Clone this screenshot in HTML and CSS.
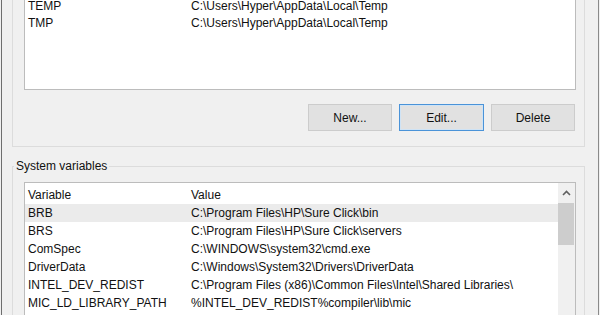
FILE: index.html
```html
<!DOCTYPE html>
<html lang="en">
<head>
    <meta charset="UTF-8">
    <meta name="viewport" content="width=device-width, initial-scale=1.0">
    <title>Environment Variables</title>
    <link rel="stylesheet" href="styles.css">
</head>
<body>
    <div class="window">
        <!-- User variables -->
        <fieldset class="group user-group">
            <legend>User variables for Hyper</legend>
            <div class="list user-list">
                <div class="rows">
                    <div class="row head"><span>Variable</span><span>Value</span></div>
                    <div class="row"><span>OneDrive</span><span>C:\Users\Hyper\OneDrive</span></div>
                    <div class="row"><span>Path</span><span>C:\Users\Hyper\AppData\Local\Microsoft\WindowsApps;</span></div>
                    <div class="row"><span>TEMP</span><span>C:\Users\Hyper\AppData\Local\Temp</span></div>
                    <div class="row"><span>TMP</span><span>C:\Users\Hyper\AppData\Local\Temp</span></div>
                </div>
            </div>
            <div class="buttons">
                <button>New...</button>
                <button class="focused">Edit...</button>
                <button>Delete</button>
            </div>
        </fieldset>

        <!-- System variables -->
        <fieldset class="group system-group">
            <legend>System variables</legend>
            <div class="list system-list">
                <div class="rows">
                    <div class="row head"><span>Variable</span><span>Value</span></div>
                    <div class="row selected"><span>BRB</span><span>C:\Program Files\HP\Sure Click\bin</span></div>
                    <div class="row"><span>BRS</span><span>C:\Program Files\HP\Sure Click\servers</span></div>
                    <div class="row"><span>ComSpec</span><span>C:\WINDOWS\system32\cmd.exe</span></div>
                    <div class="row"><span>DriverData</span><span>C:\Windows\System32\Drivers\DriverData</span></div>
                    <div class="row"><span>INTEL_DEV_REDIST</span><span>C:\Program Files (x86)\Common Files\Intel\Shared Libraries\</span></div>
                    <div class="row"><span>MIC_LD_LIBRARY_PATH</span><span>%INTEL_DEV_REDIST%compiler\lib\mic</span></div>
                </div>
                <div class="scrollbar">
                    <div class="arrow">
                        <svg width="9" height="6" viewBox="0 0 9 6"><path d="M1 5 L4.5 1.5 L8 5" fill="none" stroke="#606060" stroke-width="1.6"/></svg>
                    </div>
                    <div class="thumb"></div>
                </div>
            </div>
        </fieldset>
    </div>
</body>
</html>
```

FILE: styles.css
```css
        /* General Styles */
        body {
            margin: 0;
            padding: 0;
            background-color: #f0f0f0;
            font-family: "Liberation Sans", Arial, sans-serif;
            font-size: 12px;
            color: #111;
            overflow: hidden;
            height: 315px;
        }
        .window {
            margin-left: 1px;
            width: 596px;
            border-left: 1px solid #6e6e6e;
            border-right: 1px solid #8a8a8a;
            min-height: 420px;
            margin-top: -83px;
        }
        .group {
            margin: 0 13px 0 10px;
            border: 1px solid #dcdcdc;
            padding: 0 8px 15px 11px;
            min-width: 0;
        }
        .group legend {
            line-height: 16px;
            padding: 0 2px;
            margin-left: -10px;
        }
        .system-group {
            margin-top: 11px;
            padding-top: 8px;
        }
        .user-group {
            padding-top: 9px;
        }
        .list {
            background: white;
            border: 1px solid #bcbcbc;
            display: flex;
        }
        .rows {
            flex: 1;
        }
        .row {
            display: grid;
            grid-template-columns: 163px 1fr;
            height: 18px;
            line-height: 18px;
            white-space: nowrap;
        }
        .user-list .row {
            height: 17px;
            line-height: 17px;
        }
        .user-list {
            height: 146px;
        }
        .row span {
            padding-left: 3px;
            overflow: hidden;
        }
        .row.head {
            height: 21px;
            line-height: 18px;
            padding-top: 3px;
            box-sizing: border-box;
        }
        .row.selected {
            background-color: #ebebeb;
        }
        .buttons {
            display: flex;
            justify-content: flex-end;
            gap: 7px;
            margin-top: 14px;
            padding-right: 1px;
        }
        .buttons button {
            width: 84px;
            height: 27px;
            font-family: inherit;
            font-size: 12px;
            color: #111;
            background-color: #e1e1e1;
            border: 1px solid #cccccc;
            padding: 0;
        }
        .buttons button.focused {
            width: 85px;
            border-color: #4a93d8;
            box-shadow: inset 0 0 0 1px #cfe3f5;
        }
        .system-list {
            height: 200px;
        }
        .scrollbar {
            width: 17px;
            background-color: #f0f0f0;
            display: flex;
            flex-direction: column;
        }
        .scrollbar .arrow {
            height: 20px;
            display: flex;
            align-items: center;
            justify-content: center;
        }
        .scrollbar .thumb {
            height: 42px;
            margin: 0 1px 0 0;
            background-color: #cdcdcd;
        }
```
